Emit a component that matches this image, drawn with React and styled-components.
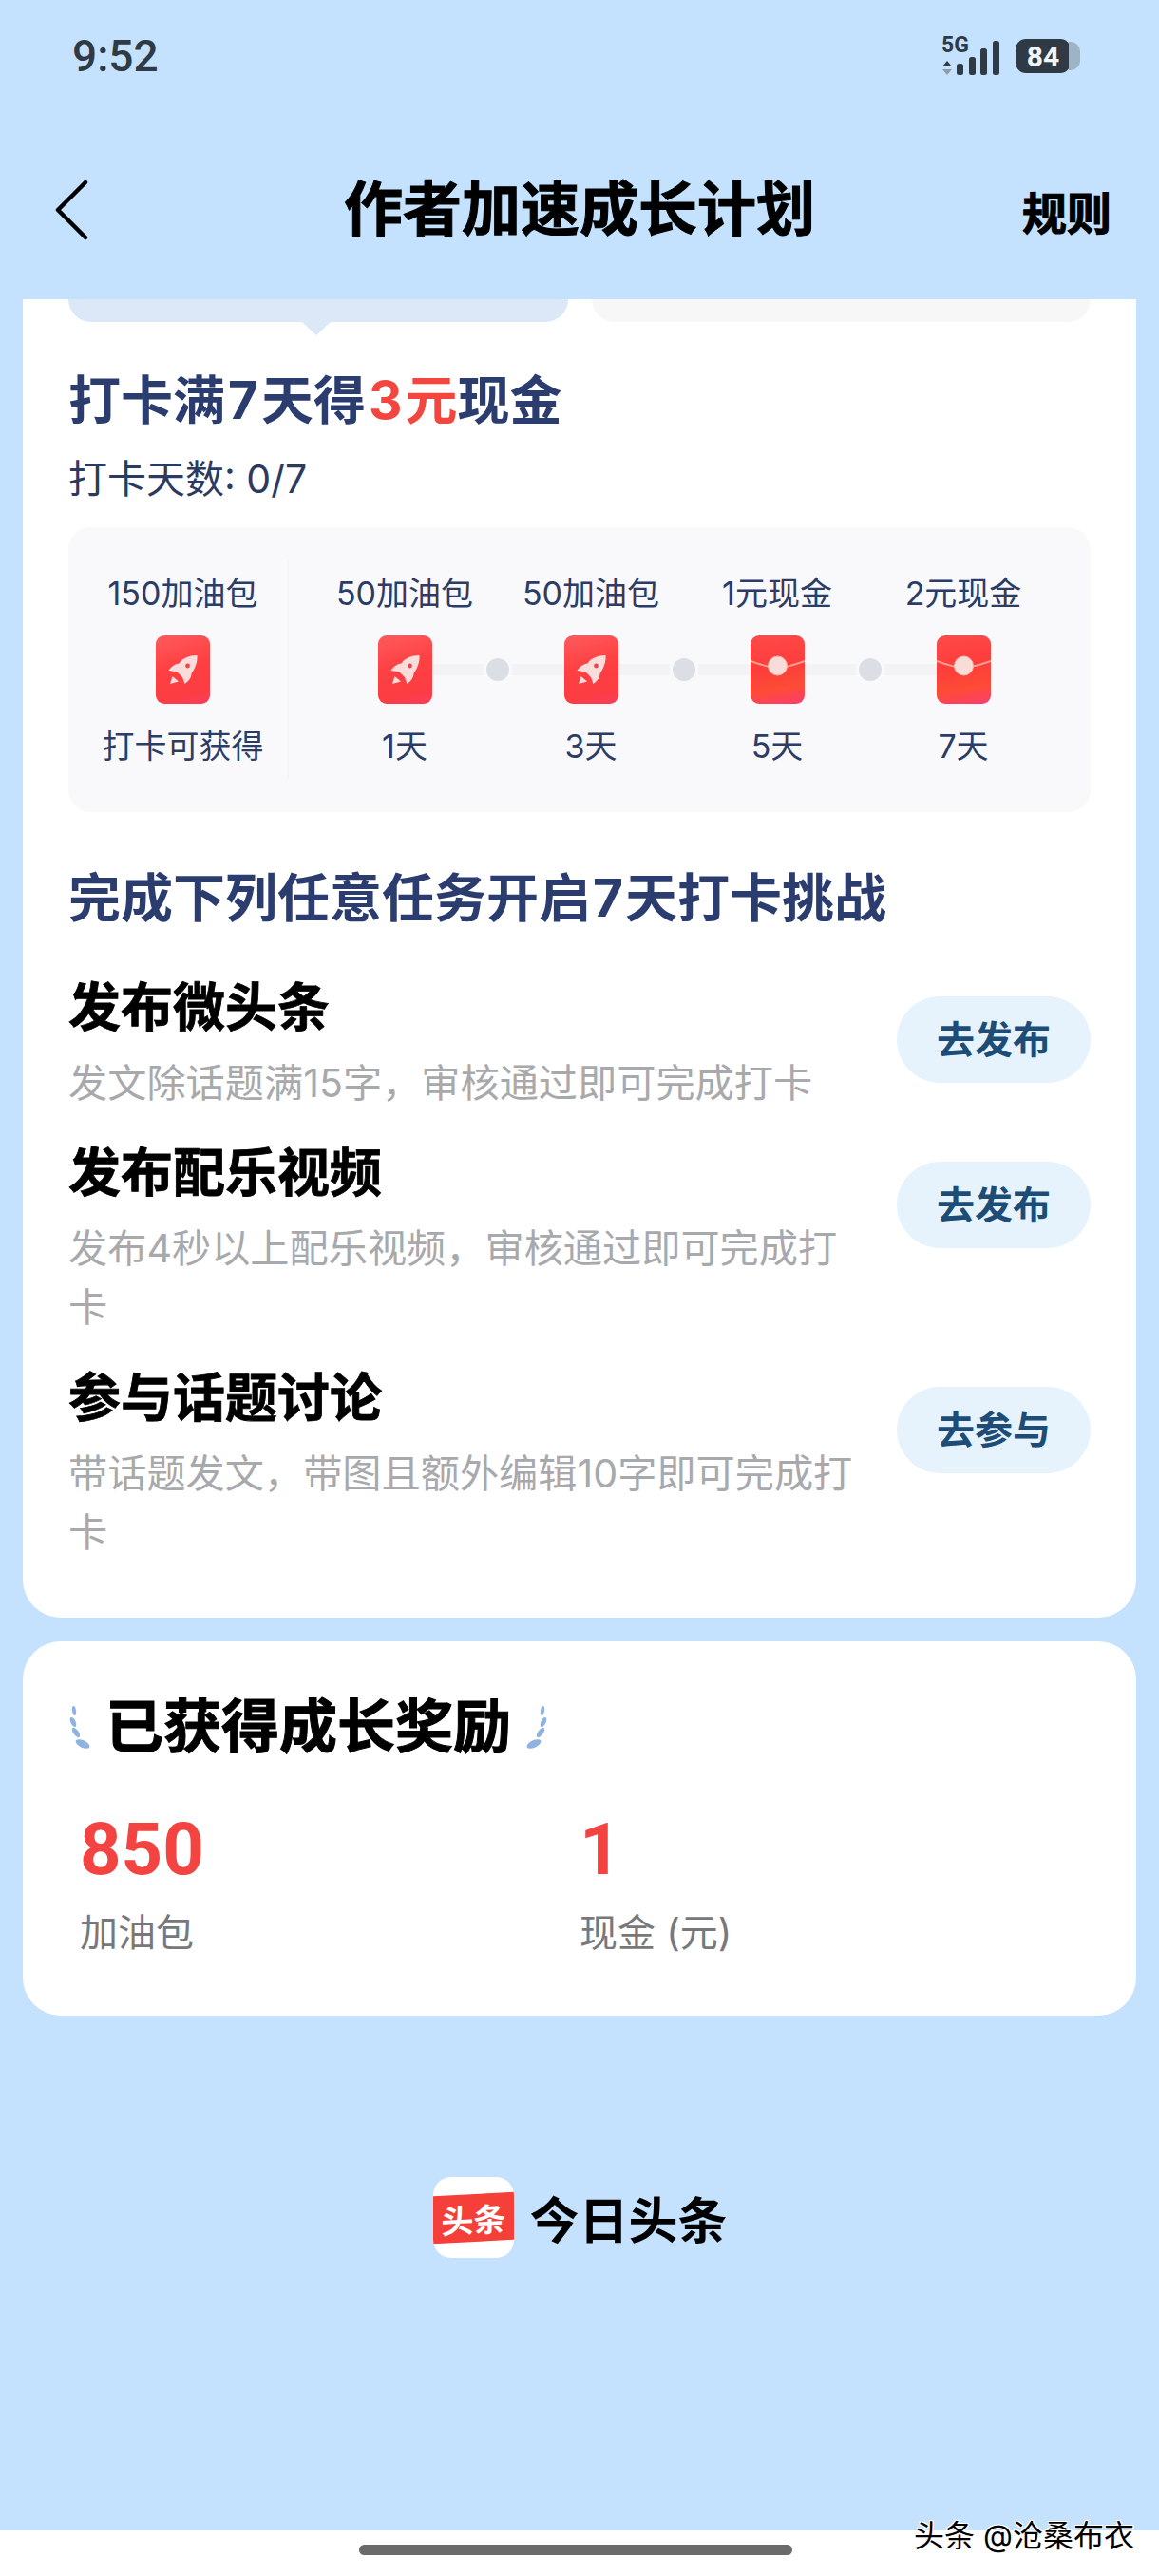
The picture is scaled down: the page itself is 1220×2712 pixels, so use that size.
import React from 'react'
import styled, { createGlobalStyle } from 'styled-components'

const GlobalStyle = createGlobalStyle`
  html, body {
    margin: 0;
    padding: 0;
    background: #c4e2fd;
    font-family: Inter, "Noto Sans CJK SC", sans-serif;
  }
  * { box-sizing: border-box; }
`

const Page = styled.div`
  width: 1220px;
  height: 2712px;
  display: flex;
  flex-direction: column;
  background: #c4e2fd;
  overflow: hidden;
`

const StatusBar = styled.div`
  height: 116px;
  flex: none;
  display: flex;
  align-items: center;
  justify-content: space-between;
  padding: 2px 83px 0 76px;
`
const Time = styled.span`
  font-family: Roboto, sans-serif;
  font-size: 46px;
  line-height: 52px;
  font-weight: 500;
  color: #2f3a45;
`
const StatusIcons = styled.div`
  display: flex;
  align-items: center;
  gap: 16px;
`
const SignalBox = styled.div`
  position: relative;
  width: 62px;
  height: 42px;
  svg { display: block; }
`
const NetworkLabel = styled.span`
  position: absolute;
  left: 0;
  top: -2px;
  font-family: Roboto, sans-serif;
  font-size: 23px;
  line-height: 24px;
  font-weight: 700;
  color: #2f3a45;
`
const Battery = styled.div`
  position: relative;
  width: 58px;
  height: 36px;
  border-radius: 11px;
  background: #2f3a45;
  color: #eef5fb;
  font-family: Roboto, sans-serif;
  font-size: 30px;
  font-weight: 700;
  display: flex;
  align-items: center;
  justify-content: center;
  margin-right: 10px;
  &::after {
    content: '';
    position: absolute;
    left: 56px;
    top: 3px;
    width: 12px;
    height: 30px;
    border-radius: 0 10px 10px 0;
    background: #9db3c6;
  }
`

const NavBar = styled.div`
  height: 199px;
  flex: none;
  padding: 11px 50px 0;
  display: grid;
  grid-template-columns: 1fr auto 1fr;
  align-items: center;
`
const BackButton = styled.div`
  padding-left: 8px;
  svg { display: block; }
`
const Title = styled.div`
  font-size: 62px;
  font-weight: 700;
  -webkit-text-stroke: 1px #000;
  color: #000;
  line-height: 70px;
`
const RulesLink = styled.div`
  justify-self: end;
  font-size: 47px;
  font-weight: 700;
  -webkit-text-stroke: 1px #000;
  color: #000;
`

const TaskCard = styled.div`
  flex: none;
  margin: 0 24px;
  padding: 0 48px 59px;
  background: #fff;
  border-radius: 0 0 40px 40px;
`
const TabStubs = styled.div`
  display: flex;
  gap: 25px;
`
const TabStub = styled.div`
  position: relative;
  width: 526px;
  height: 24px;
  background: ${p => (p.$active ? '#dce8f8' : '#f7f7f7')};
  border-radius: 0 0 24px 24px;
  ${p => p.$active && `
    &::after {
      content: '';
      position: absolute;
      left: 246px;
      top: 24px;
      border-left: 15px solid transparent;
      border-right: 15px solid transparent;
      border-top: 14px solid #dce8f8;
    }
  `}
`
const Heading = styled.h2`
  margin: ${p => p.$top}px 0 0;
  font-size: 55px;
  line-height: 70px;
  font-weight: 700;
  color: #2b3c6f;
  white-space: nowrap;
`
const HeadingDigit = styled.span`
  margin: 0 ${p => p.$gap}px;
`
const HeadingRed = styled.span`
  color: #f2463f;
`
const DaysText = styled.div`
  margin-top: 23px;
  font-size: 41px;
  line-height: 50px;
  color: #2b3a5e;
`

const RewardPanel = styled.div`
  margin-top: 26px;
  height: 300px;
  background: #f9f9fb;
  border-radius: 24px;
  display: flex;
  align-items: flex-start;
`
const FirstColumn = styled.div`
  width: 231px;
  padding-left: 10px;
  flex: none;
`
const PanelDivider = styled.div`
  width: 1px;
  height: 230px;
  margin-top: 35px;
  background: #f3f3f6;
  flex: none;
`
const Milestones = styled.div`
  margin-left: 24px;
  display: grid;
  grid-template-columns: repeat(4, 196px);
`
const MilestoneBox = styled.div`
  display: flex;
  flex-direction: column;
  align-items: center;
`
const RewardLabel = styled.div`
  margin-top: ${p => p.$top}px;
  font-size: 34px;
  line-height: 44px;
  color: #2b3c66;
  white-space: nowrap;
  text-align: center;
`
const IconSlot = styled.div`
  position: relative;
  margin-top: 22px;
  width: 57px;
  height: 72px;
`
const Rail = styled.div`
  position: absolute;
  left: 57px;
  top: 24px;
  width: 139px;
  height: 24px;
  display: flex;
  align-items: center;
`
const RailBar = styled.div`
  flex: 1;
  height: 12px;
  background: #f3f3f5;
`
const RailDot = styled.div`
  width: 24px;
  height: 24px;
  border-radius: 50%;
  background: #dcdee5;
  margin: 0 3px;
`
const IconFace = styled.div`
  position: relative;
  width: 57px;
  height: 72px;
  border-radius: 9px;
  overflow: hidden;
  background: ${p => (p.$kind === 'rocket'
    ? 'linear-gradient(165deg, #ff5a5c 0%, #fd4042 45%, #fc3d42 80%, #fb3d5e 100%)'
    : 'linear-gradient(170deg, #ff4a4a 0%, #fd3d3b 45%, #fd4c36 75%, #fb3d70 100%)')};
  svg { display: block; }
`

const TaskRow = styled.div`
  display: flex;
  justify-content: space-between;
  align-items: flex-start;
  margin-top: ${p => p.$top}px;
`
const TaskBody = styled.div`
  width: 840px;
`
const TaskName = styled.div`
  font-size: 55px;
  line-height: 70px;
  font-weight: 700;
  -webkit-text-stroke: 0.8px #000;
  color: #000;
`
const TaskDesc = styled.div`
  margin-top: 14px;
  font-size: 41.2px;
  line-height: 62px;
  color: #a8a9ad;
`
const ActionButton = styled.div`
  margin-top: 24px;
  width: 204px;
  height: 91px;
  padding-bottom: 6px;
  border-radius: 46px;
  background: #e6f3fc;
  color: #1d4c77;
  font-size: 40px;
  font-weight: 700;
  display: flex;
  align-items: center;
  justify-content: center;
`

const EarnedCard = styled.div`
  flex: none;
  margin: 25px 24px 0;
  height: 394px;
  padding: 50px 48px 0;
  background: #fff;
  border-radius: 40px;
`
const EarnedTitleRow = styled.div`
  display: flex;
  align-items: center;
  gap: 15px;
`
const LaurelBox = styled.div`
  width: 24px;
  height: 50px;
  transform: ${p => (p.$flip ? 'scaleX(-1)' : 'none')};
  svg { display: block; }
`
const EarnedTitle = styled.div`
  font-size: 61px;
  line-height: 80px;
  font-weight: 700;
  -webkit-text-stroke: 1px #000;
  color: #000;
`
const Stats = styled.div`
  margin-top: 44px;
  padding-left: 12px;
  display: grid;
  grid-template-columns: 526px 1fr;
`
const StatValue = styled.div`
  font-family: Roboto, sans-serif;
  font-size: 76px;
  line-height: 90px;
  font-weight: 700;
  color: #f44442;
`
const StatLabel = styled.div`
  margin-top: 18px;
  font-size: 40px;
  line-height: 50px;
  color: #77787c;
`

const Brand = styled.div`
  flex: none;
  margin-top: 170px;
  padding-left: 2px;
  display: flex;
  justify-content: center;
  align-items: center;
  gap: 16px;
`
const BrandIcon = styled.div`
  width: 85px;
  height: 85px;
  border-radius: 19px;
  background: #fff;
  overflow: hidden;
  display: flex;
  align-items: center;
`
const BrandBand = styled.div`
  width: 100%;
  height: 50px;
  background: #f5403a;
  color: #fff;
  font-size: 34px;
  font-weight: 700;
  display: flex;
  align-items: center;
  justify-content: center;
  transform: skewY(-3deg);
`
const BrandName = styled.div`
  font-size: 52px;
  font-weight: 700;
  color: #000;
`

const Filler = styled.div`
  flex: 1;
`
const BottomStrip = styled.div`
  position: relative;
  flex: none;
  height: 48px;
  background: #fff;
  padding: 15px 0 0 378px;
`
const HomeBar = styled.div`
  width: 456px;
  height: 11px;
  border-radius: 6px;
  background: #6b6b6b;
`
const Watermark = styled.div`
  position: absolute;
  right: 26px;
  bottom: 23px;
  font-size: 32px;
  line-height: 38px;
  color: #000;
  text-shadow: 1px 1px 0 #fff, -1px -1px 0 #fff, 1px -1px 0 #fff, -1px 1px 0 #fff;
  white-space: nowrap;
`

const SignalIcon = () => (
  <SignalBox>
    <NetworkLabel>5G</NetworkLabel>
    <svg width="62" height="42" viewBox="0 0 62 42">
      <path d="M6 26l5 6H1z" fill="#2f3a45" />
      <path d="M1 35h10l-5 6z" fill="#8f9ba6" />
      <rect x="16" y="29" width="7" height="12" rx="2.5" fill="#2f3a45" />
      <rect x="29" y="22" width="7" height="19" rx="2.5" fill="#2f3a45" />
      <rect x="41" y="13" width="7" height="28" rx="2.5" fill="#2f3a45" />
      <rect x="54" y="5" width="7" height="36" rx="2.5" fill="#2f3a45" />
    </svg>
  </SignalBox>
)

const BackIcon = () => (
  <BackButton>
    <svg width="36" height="64" viewBox="0 0 36 64">
      <path d="M32 3L3 32l29 29" fill="none" stroke="#000" strokeWidth="4.5" strokeLinecap="round" strokeLinejoin="round" />
    </svg>
  </BackButton>
)

const RocketIcon = () => (
  <IconFace $kind="rocket">
    <svg width="57" height="72" viewBox="0 0 57 72">
      <path d="M43.5 21C35 21 28 24 24.5 29.5C20 30 16 33 13.5 37L22.5 38.5 28 44 30.5 51C35 48 37.5 44 37.5 40C41.5 34.5 44 28 43.5 21Z" fill="#fcdcdb" />
      <path d="M17.5 43L15 51 24 48.5Z" fill="#fcdcdb" />
      <circle cx="33.5" cy="32" r="2.4" fill="#e8484e" />
    </svg>
  </IconFace>
)

const EnvelopeIcon = () => (
  <IconFace $kind="envelope">
    <svg width="57" height="72" viewBox="0 0 57 72">
      <path d="M0 27C10 31 18 33 28.5 34.5C39 33 47 31 57 27" fill="none" stroke="#ffa093" strokeWidth="2" />
      <circle cx="28.5" cy="32" r="10" fill="#f8dcd8" stroke="#f4b5ac" strokeWidth="1" />
    </svg>
  </IconFace>
)

const leaves = [
  [6, 8, 2, 5, -8],
  [5, 20, 2.6, 5.5, -25],
  [8, 31, 2.8, 6, -35],
  [15, 43, 3.8, 8, -65]
]

const Laurel = ({ $flip }) => (
  <LaurelBox $flip={$flip}>
    <svg width="24" height="50" viewBox="0 0 24 50">
      {leaves.map(([x, y, rx, ry, r]) => (
        <ellipse key={y} cx={x} cy={y} rx={rx} ry={ry} fill="#8fb2e0" transform={`rotate(${r} ${x} ${y})`} />
      ))}
    </svg>
  </LaurelBox>
)

const milestones = [
  { label: '50加油包', day: '1天', icon: 'rocket' },
  { label: '50加油包', day: '3天', icon: 'rocket' },
  { label: '1元现金', day: '5天', icon: 'envelope' },
  { label: '2元现金', day: '7天', icon: 'envelope' }
]

const tasks = [
  { name: '发布微头条', desc: '发文除话题满15字，审核通过即可完成打卡', action: '去发布', top: 45 },
  { name: '发布配乐视频', desc: '发布4秒以上配乐视频，审核通过即可完成打卡', action: '去发布', top: 28 },
  { name: '参与话题讨论', desc: '带话题发文，带图且额外编辑10字即可完成打卡', action: '去参与', top: 29 }
]

const App = () => (
  <Page>
    <GlobalStyle />
    <StatusBar>
      <Time>9:52</Time>
      <StatusIcons>
        <SignalIcon />
        <Battery>84</Battery>
      </StatusIcons>
    </StatusBar>
    <NavBar>
      <BackIcon />
      <Title>作者加速成长计划</Title>
      <RulesLink>规则</RulesLink>
    </NavBar>

    <TaskCard>
      <TabStubs>
        <TabStub $active />
        <TabStub />
      </TabStubs>
      <Heading $top={47}>打卡满<HeadingDigit $gap={3}>7</HeadingDigit>天得<HeadingRed><HeadingDigit $gap={3}>3</HeadingDigit>元</HeadingRed>现金</Heading>
      <DaysText>打卡天数: 0/7</DaysText>
      <RewardPanel>
        <FirstColumn>
          <MilestoneBox>
            <RewardLabel $top={48}>150加油包</RewardLabel>
            <IconSlot><RocketIcon /></IconSlot>
            <RewardLabel $top={23}>打卡可获得</RewardLabel>
          </MilestoneBox>
        </FirstColumn>
        <PanelDivider />
        <Milestones>
          {milestones.map((m, i) => (
            <MilestoneBox key={m.day}>
              <RewardLabel $top={48}>{m.label}</RewardLabel>
              <IconSlot>
                {m.icon === 'rocket' ? <RocketIcon /> : <EnvelopeIcon />}
                {i < milestones.length - 1 && (
                  <Rail>
                    <RailBar />
                    <RailDot />
                    <RailBar />
                  </Rail>
                )}
              </IconSlot>
              <RewardLabel $top={23}>{m.day}</RewardLabel>
            </MilestoneBox>
          ))}
        </Milestones>
      </RewardPanel>

      <Heading $top={55}>完成下列任意任务开启<HeadingDigit $gap={2}>7</HeadingDigit>天打卡挑战</Heading>
      {tasks.map(t => (
        <TaskRow key={t.name} $top={t.top}>
          <TaskBody>
            <TaskName>{t.name}</TaskName>
            <TaskDesc>{t.desc}</TaskDesc>
          </TaskBody>
          <ActionButton>{t.action}</ActionButton>
        </TaskRow>
      ))}
    </TaskCard>

    <EarnedCard>
      <EarnedTitleRow>
        <Laurel />
        <EarnedTitle>已获得成长奖励</EarnedTitle>
        <Laurel $flip />
      </EarnedTitleRow>
      <Stats>
        <div>
          <StatValue>850</StatValue>
          <StatLabel>加油包</StatLabel>
        </div>
        <div>
          <StatValue>1</StatValue>
          <StatLabel>现金 (元)</StatLabel>
        </div>
      </Stats>
    </EarnedCard>

    <Brand>
      <BrandIcon>
        <BrandBand>头条</BrandBand>
      </BrandIcon>
      <BrandName>今日头条</BrandName>
    </Brand>

    <Filler />
    <BottomStrip>
      <HomeBar />
      <Watermark>头条 @沧桑布衣</Watermark>
    </BottomStrip>
  </Page>
)

export default App
